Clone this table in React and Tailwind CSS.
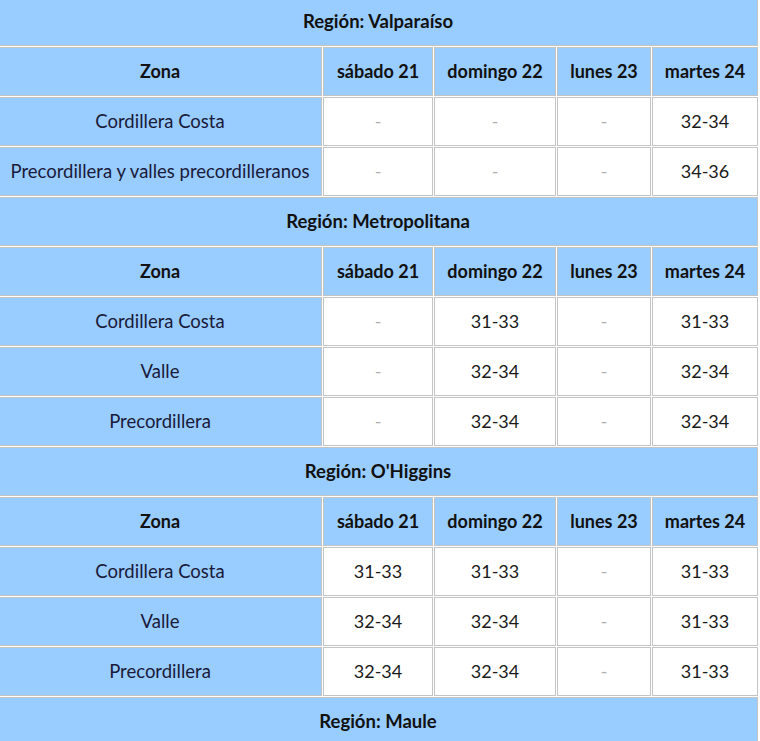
import React from "react";

const days = ["sábado 21", "domingo 22", "lunes 23", "martes 24"];

const regions = [
  {
    name: "Valparaíso",
    rows: [
      ["Cordillera Costa", "-", "-", "-", "32-34"],
      ["Precordillera y valles precordilleranos", "-", "-", "-", "34-36"],
    ],
  },
  {
    name: "Metropolitana",
    rows: [
      ["Cordillera Costa", "-", "31-33", "-", "31-33"],
      ["Valle", "-", "32-34", "-", "32-34"],
      ["Precordillera", "-", "32-34", "-", "32-34"],
    ],
  },
  {
    name: "O'Higgins",
    rows: [
      ["Cordillera Costa", "31-33", "31-33", "-", "31-33"],
      ["Valle", "32-34", "32-34", "-", "31-33"],
      ["Precordillera", "32-34", "32-34", "-", "31-33"],
    ],
  },
  { name: "Maule", rows: [] },
];

const blue = "bg-[#99ccff] border border-[#c4c4c4] h-[49px] p-0 text-center align-middle";
const white = "bg-white border border-[#c4c4c4] h-[49px] p-0 text-center align-middle";

export default function App() {
  return (
    <div className="w-[760px] h-[741px] overflow-hidden bg-white" style={{ fontFamily: "Lato, 'Noto Sans', sans-serif" }}>
      <table className="table-fixed border-separate border-spacing-[1px] w-[762px] -ml-[3px] -mt-[4px] text-[18px]">
        <colgroup>
          <col className="w-[324px]" />
          <col className="w-[110px]" />
          <col className="w-[122px]" />
          <col className="w-[94px]" />
          <col className="w-[106px]" />
        </colgroup>
        <tbody>
          {regions.map((r) => (
            <React.Fragment key={r.name}>
              <tr>
                <td colSpan={5} className={blue + " font-bold text-[#111] text-[18.5px]"}>
                  Región: {r.name}
                </td>
              </tr>
              {r.rows.length > 0 && (
                <tr>
                  <td className={blue + " font-bold text-[#111]"}>Zona</td>
                  {days.map((d) => (
                    <td key={d} className={blue + " font-bold text-[#111]"}>
                      {d}
                    </td>
                  ))}
                </tr>
              )}
              {r.rows.map((row, i) => (
                <tr key={i}>
                  <td className={blue + " text-[#1a1a3a] text-[18.5px]"}>{row[0]}</td>
                  {row.slice(1).map((v, j) => (
                    <td key={j} className={white + (v === "-" ? " text-[#b0b0b0]" : " text-[#1a1a1a]")}>
                      {v}
                    </td>
                  ))}
                </tr>
              ))}
            </React.Fragment>
          ))}
        </tbody>
      </table>
    </div>
  );
}
